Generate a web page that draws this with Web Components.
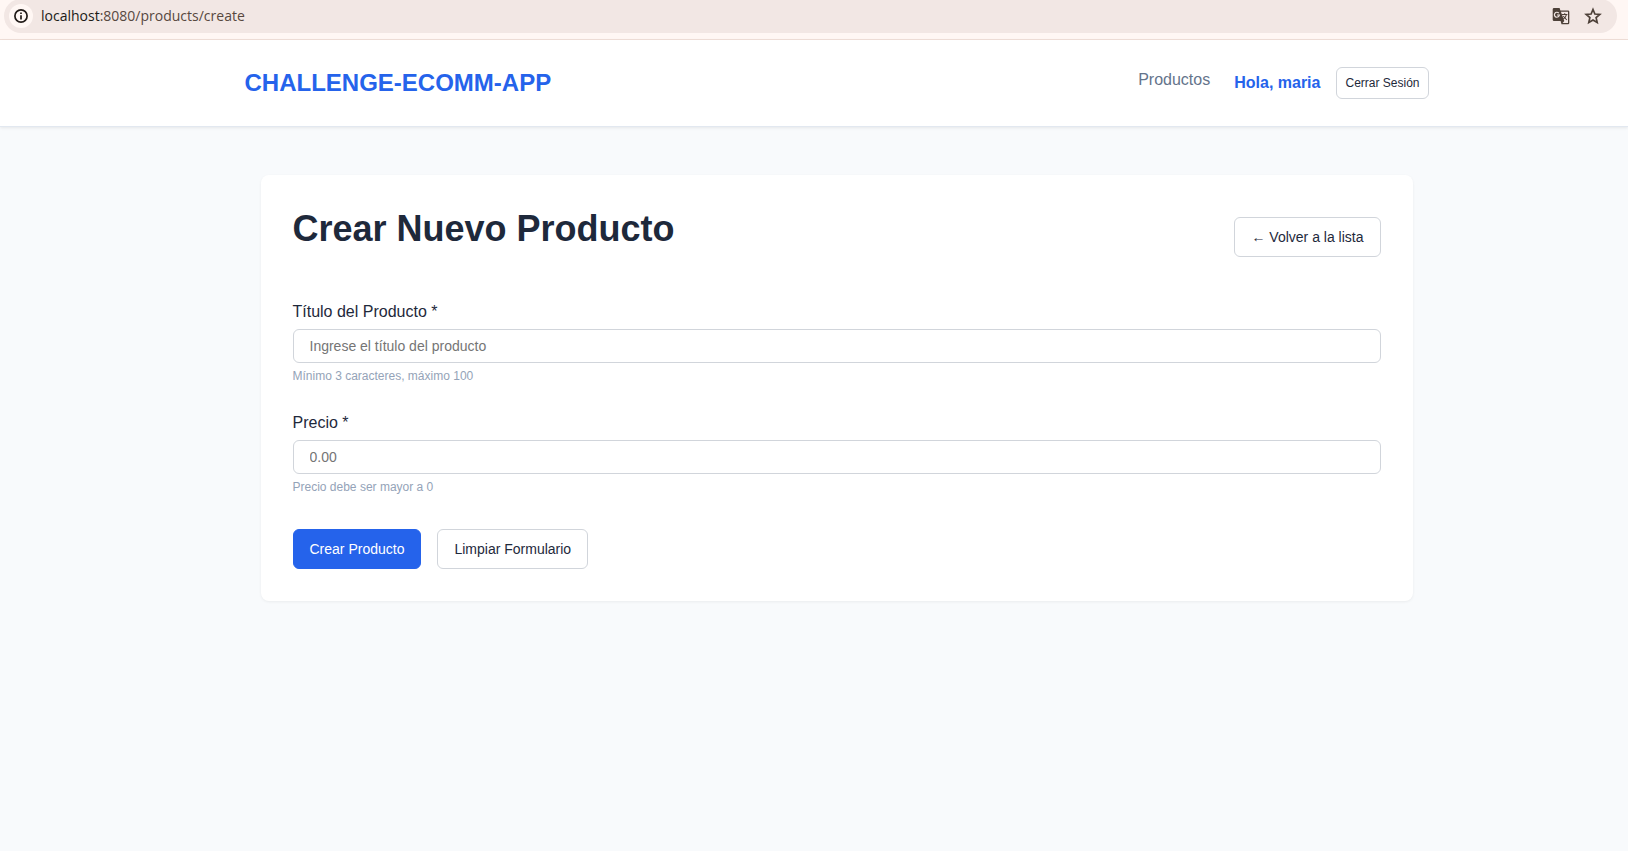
<!DOCTYPE html>
<html lang="es">
<head>
<meta charset="utf-8">
<title>Crear Nuevo Producto</title>
<style>
  html, body { margin: 0; min-height: 100%; background: #f8fafc; }
  body { font: 16px/26px "Liberation Sans", Arial, sans-serif; color: #1e293b; }
</style>
</head>
<body>
<browser-bar host="localhost" path=":8080/products/create"></browser-bar>
<site-header brand="CHALLENGE-ECOMM-APP">
  <nav-link href="/products">Productos</nav-link>
  <user-menu>Hola, maria</user-menu>
</site-header>
<page-container>
  <product-card heading="Crear Nuevo Producto">
    <product-form></product-form>
  </product-card>
</page-container>

<script>
const BUTTON_CSS = `
  .btn {
    display: inline-block; box-sizing: border-box; margin: 0; padding: 8px 16px;
    border: 1px solid #d1d5db; border-radius: 6px; background: #fff; color: #1e293b;
    font: 14px/22px "Liberation Sans", Arial, sans-serif; text-decoration: none;
    white-space: nowrap; cursor: pointer;
  }
  .btn.primary { background: #2563eb; border-color: #2563eb; color: #fff; }
  .btn.small { padding: 5px 8px; font-size: 12px; line-height: 20px; }
`;

class BaseElement extends HTMLElement {
  connectedCallback() {
    if (this.shadowRoot) return;
    this.attachShadow({ mode: "open" }).innerHTML = this.render();
  }
  attr(name) { return this.getAttribute(name) || ""; }
}

customElements.define("browser-bar", class extends BaseElement {
  render() {
    return `<style>
      :host { display: block; height: 39px; background: #fff7f4; border-bottom: 1px solid #f0dfd8; overflow: hidden;
              font: 14px/20px "Open Sans", "Noto Sans", sans-serif; color: #57483f; }
      .pill { display: flex; align-items: center; box-sizing: border-box; height: 34px; margin: -1px 11px 0 4px;
              padding: 0 15px 0 5px; border-radius: 17px; background: #f2e7e4; }
      .info { display: flex; align-items: center; justify-content: center; width: 24px; height: 24px;
              border-radius: 50%; background: #fff7f4; }
      .url { flex: 1; margin-left: 8px; }
      .url b { font-weight: 400; color: #201a17; }
      .actions { display: flex; gap: 14px; }
      svg { display: block; }
    </style>
    <div class="pill">
      <span class="info"><svg width="14" height="14" viewBox="0 0 14 14" fill="none" stroke="#201a17" stroke-width="1.7"><circle cx="7" cy="7" r="6.1"/><path d="M7 6.2v4.2M7 3.4v1.7"/></svg></span>
      <span class="url"><b>${this.attr("host")}</b>${this.attr("path")}</span>
      <span class="actions">
        <svg width="18" height="18" viewBox="0 0 18 18"><path fill="#4d4038" d="M2 1h5.6l.8 2.500H16a1.300 1.300 0 0 1 1.300 1.300V16a1.300 1.300 0 0 1-1.300 1.300H9.500L8.600 14H2A1.300 1.300 0 0 1 .7 12.700V2.300A1.300 1.300 0 0 1 2 1z"/><path fill="#f2e7e4" d="M8.900 4.800H16V16h-5.400l1.700-2z"/><path fill="none" stroke="#f2e7e4" stroke-width="1.200" d="M6.800 6.100A2.500 2.500 0 1 0 7.400 8H5"/><path fill="none" stroke="#4d4038" stroke-width="1.100" d="M10 7.500h5.400M12.700 6.300v1.200M14.500 7.500c-.4 2-1.600 3.400-3.200 4.500M11.200 9l3.600 4"/></svg>
        <svg width="18" height="18" viewBox="0 0 18 18" fill="none" stroke="#4d4038" stroke-width="1.700"><path d="M9 2.500l1.900 4.500 4.900.4-3.700 3.200 1.100 4.800L9 12.900l-4.200 2.500 1.100-4.800L2.200 7.400l4.900-.4z"/></svg>
      </span>
    </div>`;
  }
});

customElements.define("site-header", class extends BaseElement {
  render() {
    return `<style>
      :host { display: block; padding-left: 45px; background: #fff; border-bottom: 1px solid #e2e8f0;
              box-shadow: 0 1px 3px rgba(0,0,0,.08); }
      .inner { display: flex; align-items: center; justify-content: space-between; max-width: 1184px;
               min-height: 86px; margin: 0 auto; }
      .brand { color: #2563eb; font-size: 24px; font-weight: 700; line-height: 38px; text-decoration: none; }
      nav { display: flex; align-items: center; gap: 24px; }
    </style>
    <div class="inner"><a class="brand" href="/">${this.attr("brand")}</a><nav><slot></slot></nav></div>`;
  }
});

customElements.define("nav-link", class extends BaseElement {
  render() {
    return `<style>
      :host { display: block; padding-bottom: 6px; }
      a { color: #64748b; text-decoration: none; }
    </style><a href="${this.attr("href")}"><slot></slot></a>`;
  }
});

customElements.define("user-menu", class extends BaseElement {
  render() {
    return `<style>
      :host { display: flex; align-items: center; gap: 16px; }
      .name { color: #2563eb; font-weight: 700; }
      ${BUTTON_CSS}
    </style><span class="name"><slot></slot></span><button class="btn small" type="button">Cerrar Sesión</button>`;
  }
});

customElements.define("page-container", class extends BaseElement {
  render() {
    return `<style>
      :host { display: block; padding: 48px 0 48px 45px; }
      main { max-width: 1152px; margin: 0 auto; }
    </style><main><slot></slot></main>`;
  }
});

customElements.define("product-card", class extends BaseElement {
  render() {
    return `<style>
      :host { display: block; padding: 32px; border-radius: 8px; background: #fff; box-shadow: 0 1px 3px rgba(0,0,0,.06); }
      header { display: flex; align-items: center; justify-content: space-between; margin-bottom: 32px; }
      h1 { margin: 0 0 16px; font-size: 36px; line-height: 44px; font-weight: 700; }
      ${BUTTON_CSS}
    </style>
    <header><h1>${this.attr("heading")}</h1><a class="btn" href="/products">← Volver a la lista</a></header>
    <slot></slot>`;
  }
});

customElements.define("form-field", class extends BaseElement {
  render() {
    return `<style>
      :host { display: block; }
      label { display: block; margin-bottom: 4px; }
      input { display: block; box-sizing: border-box; width: 100%; margin: 0; padding: 8px 16px; border: 1px solid #d1d5db;
              border-radius: 6px; background: #fff; color: #1e293b; font: 14px/16px "Liberation Sans", Arial, sans-serif; }
      input::placeholder { color: #757575; }
      small { display: block; margin-top: 4px; color: #94a3b8; font-size: 12px; line-height: 19px; }
    </style>
    <label for="control">${this.attr("label")}</label>
    <input id="control" type="text" inputmode="${this.attr("mode") || "text"}" placeholder="${this.attr("placeholder")}" aria-describedby="hint">
    <small id="hint">${this.attr("hint")}</small>`;
  }
});

customElements.define("product-form", class extends BaseElement {
  render() {
    return `<style>
      :host { display: block; }
      form { display: grid; gap: 24px; }
      .actions { display: flex; gap: 16px; margin-top: 8px; }
      ${BUTTON_CSS}
    </style>
    <form>
      <form-field label="Título del Producto *" placeholder="Ingrese el título del producto" hint="Mínimo 3 caracteres, máximo 100"></form-field>
      <form-field label="Precio *" mode="decimal" placeholder="0.00" hint="Precio debe ser mayor a 0"></form-field>
      <div class="actions"><button class="btn primary" type="submit">Crear Producto</button><button class="btn" type="reset">Limpiar Formulario</button></div>
    </form>`;
  }
});
</script>
</body>
</html>
